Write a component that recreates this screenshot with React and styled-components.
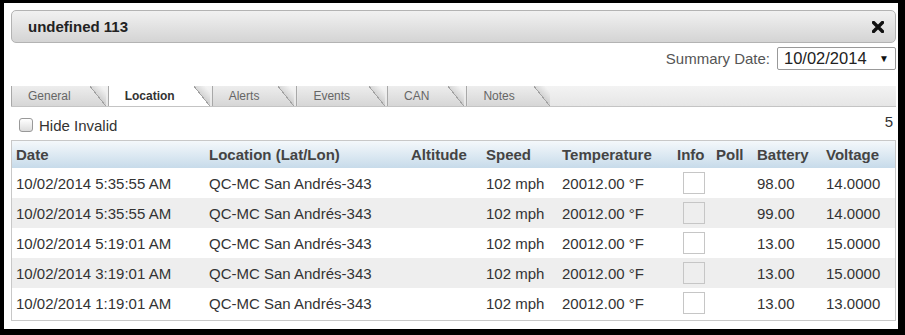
import React from "react";
import styled, { createGlobalStyle } from "styled-components";

const GlobalStyle = createGlobalStyle`
  html, body {
    margin: 0;
    padding: 0;
    background: #ffffff;
  }
  body {
    font-family: "Liberation Sans", Arial, sans-serif;
  }
`;

const COLS = "193px 202px 75px 76px 115px 39px 41px 69px 1fr";

const Frame = styled.div`
  width: 905px;
  height: 335px;
  box-sizing: border-box;
  border-style: solid;
  border-color: #000;
  border-width: 3px 7px 6px 4px;
  padding: 7px 2px 0 7px;
  background: #fff;
  color: #333;
  font-size: 15px;
  overflow: hidden;
`;

const TitleBar = styled.div`
  height: 33px;
  box-sizing: border-box;
  display: flex;
  align-items: center;
  justify-content: space-between;
  padding: 0 11px 0 16px;
  border: 1px solid #b3b3b3;
  border-radius: 5px;
  background: linear-gradient(#f1f1f1, #d4d4d4);

  .title {
    font-weight: bold;
    font-size: 15px;
    color: #222;
  }
`;

const SummaryRow = styled.div`
  margin-top: 4px;
  display: flex;
  justify-content: flex-end;
  align-items: center;
  gap: 7px;

  .label {
    color: #555;
    font-size: 15px;
  }
`;

const DateSelect = styled.div`
  width: 119px;
  height: 23px;
  box-sizing: border-box;
  border: 1px solid #999;
  border-radius: 2px;
  display: flex;
  align-items: center;
  justify-content: space-between;
  padding: 0 6px 0 6px;
  font-size: 16.5px;
  color: #222;

  .arrow {
    font-size: 10px;
    color: #111;
  }
`;

const TabStrip = styled.div`
  margin-top: 16px;
  height: 21px;
  box-sizing: border-box;
  display: flex;
  gap: 2px;
  background: linear-gradient(#f3f3f3, #e6e6e6);
  border-bottom: 1px solid #c4c4c4;
`;

const Tab = styled.div`
  position: relative;
  z-index: 0;
  height: 20px;
  line-height: 20px;
  padding: 0 35px 0 16px;
  font-size: 12px;
  font-weight: ${(p) => (p.$active ? "bold" : "normal")};
  color: ${(p) => (p.$active ? "#333" : "#666")};
  border-left: 1px solid #a8a8a8;

  &::before {
    content: "";
    position: absolute;
    inset: 0;
    z-index: -1;
    background: ${(p) =>
      p.$active ? "#ffffff" : "linear-gradient(#ededed, #d6d6d6)"};
    clip-path: polygon(0 0, calc(100% - 16px) 0, 100% 100%, 0 100%);
  }

  &::after {
    content: "";
    position: absolute;
    top: 0;
    right: 0;
    width: 16px;
    height: 100%;
    background: linear-gradient(
      to top right,
      transparent 0,
      transparent calc(50% - 0.7px),
      #a2a2a2 calc(50% - 0.7px),
      #a2a2a2 calc(50% + 0.3px),
      rgba(0, 0, 0, 0.11) calc(50% + 0.3px),
      rgba(0, 0, 0, 0) 85%
    );
  }
`;

const FilterRow = styled.div`
  margin-top: 4px;
  height: 28px;
  display: flex;
  align-items: center;
  padding: 0 3px 0 8px;

  label {
    display: flex;
    align-items: center;
    gap: 6px;
    color: #333;
  }

  .count {
    margin-left: auto;
    padding-bottom: 8px;
  }
`;

const Check = styled.span`
  width: 14px;
  height: 14px;
  box-sizing: border-box;
  border: 1px solid #999;
  border-radius: 3px;
  background: linear-gradient(#ffffff, #dcdcdc);
`;

const Table = styled.div`
  margin-top: 1px;
  border: 1px solid #c8c8c8;
  padding-bottom: 2px;
`;

const HeaderRow = styled.div`
  display: grid;
  grid-template-columns: ${COLS};
  height: 27px;
  align-items: center;
  background: linear-gradient(#f4f8fb, #c7dbea);
  font-weight: bold;
  color: #444;
`;

const Row = styled.div`
  display: grid;
  grid-template-columns: ${COLS};
  height: 30px;
  align-items: center;
  background: ${(p) => (p.$alt ? "#eeeeee" : "#ffffff")};
  color: #333;
`;

const Cell = styled.div`
  padding-left: 4px;
  white-space: nowrap;
`;

const InfoBox = styled.span`
  display: block;
  margin-left: 6px;
  width: 22px;
  height: 22px;
  box-sizing: border-box;
  border: 1px solid #c6c6c6;
  background: ${(p) => (p.$alt ? "#eeeeee" : "#ffffff")};
`;

const CloseIcon = () => (
  <svg width="12" height="12" viewBox="0 0 12 12">
    <path d="M1.5 1.5 L10.5 10.5 M10.5 1.5 L1.5 10.5" stroke="#111" strokeWidth="3.4" strokeLinecap="round" />
  </svg>
);

const tabs = ["General", "Location", "Alerts", "Events", "CAN", "Notes"];
const headers = ["Date", "Location (Lat/Lon)", "Altitude", "Speed", "Temperature", "Info", "Poll", "Battery", "Voltage"];

const rows = [
  { date: "10/02/2014 5:35:55 AM", battery: "98.00", voltage: "14.0000" },
  { date: "10/02/2014 5:35:55 AM", battery: "99.00", voltage: "14.0000" },
  { date: "10/02/2014 5:19:01 AM", battery: "13.00", voltage: "15.0000" },
  { date: "10/02/2014 3:19:01 AM", battery: "13.00", voltage: "15.0000" },
  { date: "10/02/2014 1:19:01 AM", battery: "13.00", voltage: "13.0000" },
];

export default function App() {
  return (
    <>
      <GlobalStyle />
      <Frame>
        <TitleBar>
          <span className="title">undefined 113</span>
          <CloseIcon />
        </TitleBar>
        <SummaryRow>
          <span className="label">Summary Date:</span>
          <DateSelect>
            <span>10/02/2014</span>
            <span className="arrow">▼</span>
          </DateSelect>
        </SummaryRow>
        <TabStrip>
          {tabs.map((t) => (
            <Tab key={t} $active={t === "Location"}>{t}</Tab>
          ))}
        </TabStrip>
        <FilterRow>
          <label>
            <Check />
            Hide Invalid
          </label>
          <span className="count">5</span>
        </FilterRow>
        <Table>
          <HeaderRow>
            {headers.map((h) => (
              <Cell key={h}>{h}</Cell>
            ))}
          </HeaderRow>
          {rows.map((r, i) => (
            <Row key={i} $alt={i % 2 === 1}>
              <Cell>{r.date}</Cell>
              <Cell>QC-MC San Andrés-343</Cell>
              <Cell></Cell>
              <Cell>102 mph</Cell>
              <Cell>20012.00 °F</Cell>
              <Cell><InfoBox $alt={i % 2 === 1} /></Cell>
              <Cell></Cell>
              <Cell>{r.battery}</Cell>
              <Cell>{r.voltage}</Cell>
            </Row>
          ))}
        </Table>
      </Frame>
    </>
  );
}
